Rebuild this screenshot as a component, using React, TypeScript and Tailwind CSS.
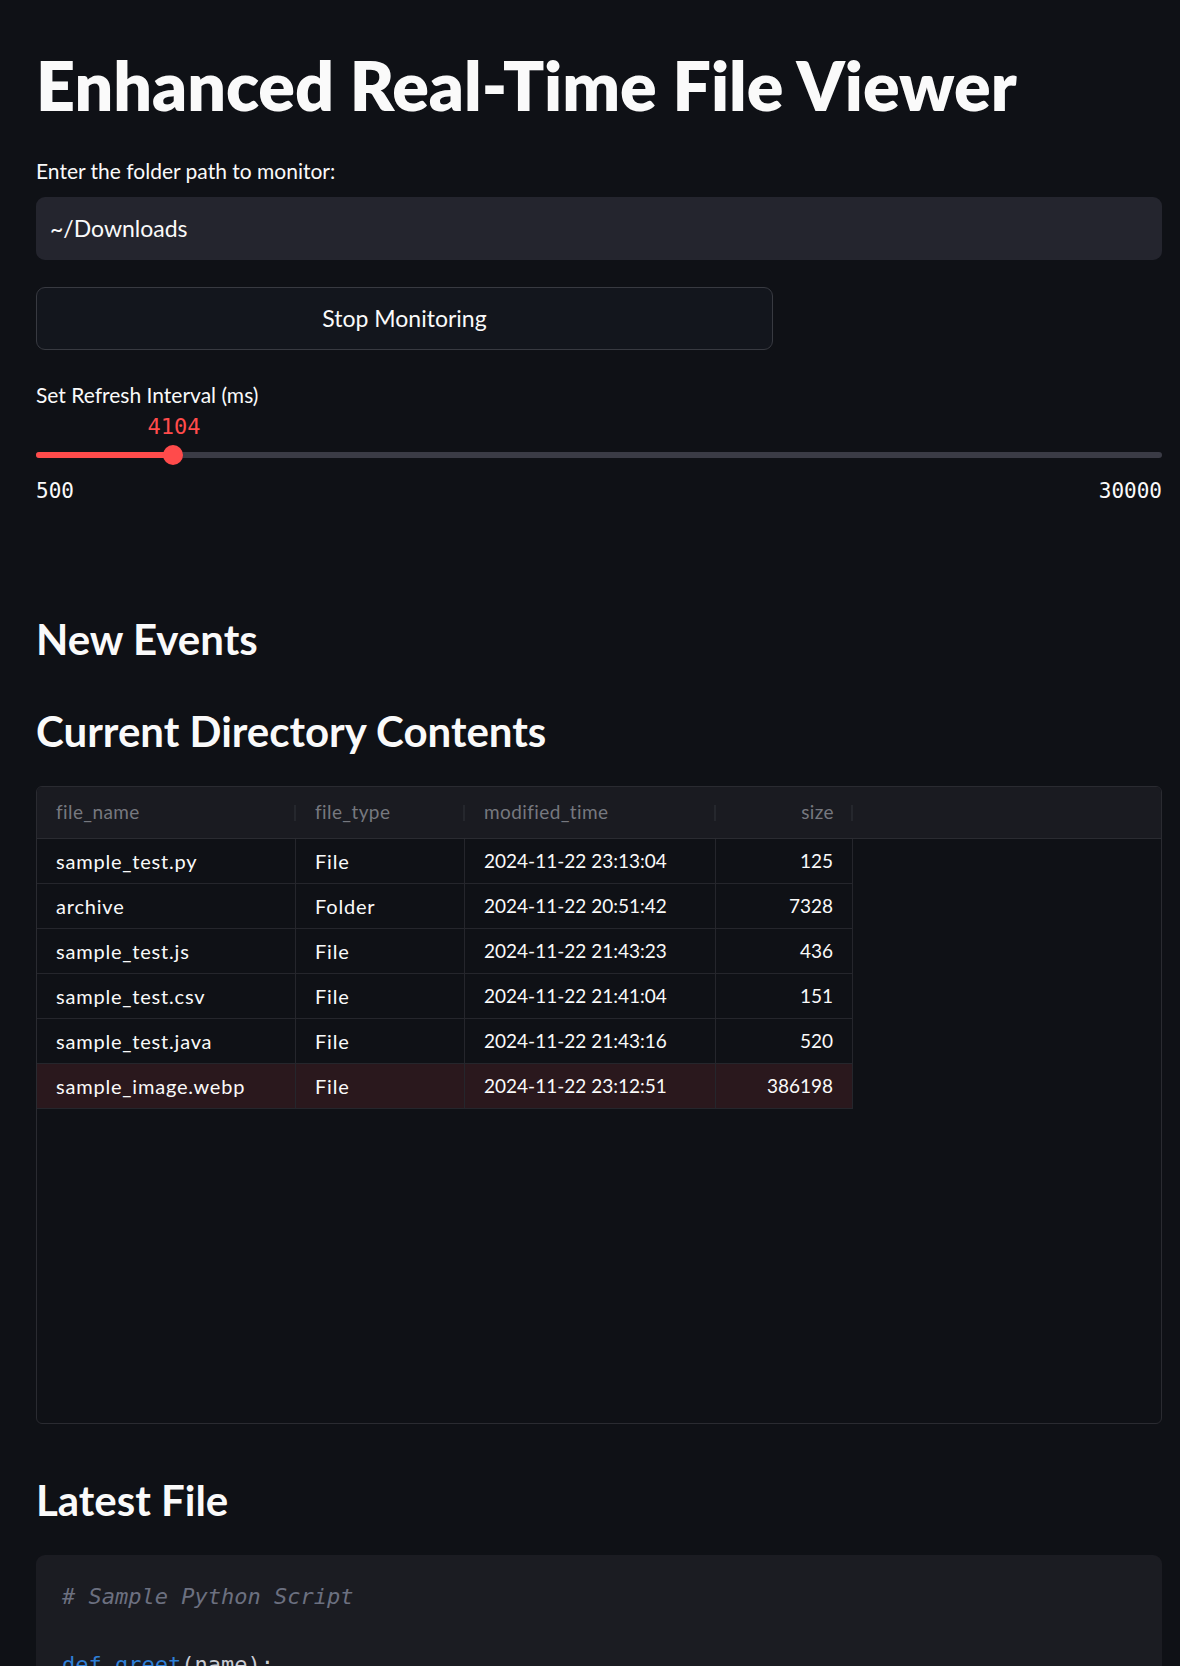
import React from "react";

interface FileRow {
  name: string;
  type: string;
  time: string;
  size: number;
  highlight?: boolean;
}

const rows: FileRow[] = [
  { name: "sample_test.py", type: "File", time: "2024-11-22 23:13:04", size: 125 },
  { name: "archive", type: "Folder", time: "2024-11-22 20:51:42", size: 7328 },
  { name: "sample_test.js", type: "File", time: "2024-11-22 21:43:23", size: 436 },
  { name: "sample_test.csv", type: "File", time: "2024-11-22 21:41:04", size: 151 },
  { name: "sample_test.java", type: "File", time: "2024-11-22 21:43:16", size: 520 },
  { name: "sample_image.webp", type: "File", time: "2024-11-22 23:12:51", size: 386198, highlight: true },
];

const HeaderCell: React.FC<{ label: string; width: string; right?: boolean }> = ({ label, width, right }) => (
  <div className={`${width} h-full flex items-center`}>
    <span className={`flex-1 px-[19px] ${right ? "text-right pr-[17px]" : ""}`}>{label}</span>
    <span className="w-[2px] h-[16px] bg-[#25272d]" />
  </div>
);

const FileTable: React.FC = () => (
  <div className="mt-[30px] h-[638px] border border-[#2a2b31] rounded-[6px] overflow-hidden bg-[#0f1116] text-[19px]">
    <div className="flex h-[52px] bg-[#1a1b21] border-b border-[#2a2b31] text-[#76787f] tracking-[0.4px]">
      <HeaderCell label="file_name" width="w-[259px]" />
      <HeaderCell label="file_type" width="w-[169px]" />
      <HeaderCell label="modified_time" width="w-[251px]" />
      <HeaderCell label="size" width="w-[137px]" right />
    </div>
    {rows.map((r) => (
      <div
        key={r.name}
        className={`flex w-[816px] h-[45px] border-b border-[#25262c] ${r.highlight ? "bg-[#2a181d]" : ""}`}
      >
        <div className="w-[259px] flex items-center px-[19px] border-r border-[#25262c] text-[20px] tracking-[0.8px]">
          {r.name}
        </div>
        <div className="w-[169px] flex items-center px-[19px] border-r border-[#25262c] text-[20px] tracking-[0.8px]">
          {r.type}
        </div>
        <div className="w-[251px] flex items-center px-[19px] border-r border-[#25262c]">{r.time}</div>
        <div className="w-[137px] flex items-center justify-end px-[19px] border-r border-[#25262c]">{r.size}</div>
      </div>
    ))}
  </div>
);

const RefreshSlider: React.FC = () => (
  <div className="font-['DejaVu_Sans_Mono',monospace]">
    <div className="relative mt-[8px] h-[64px]">
      <span className="absolute top-0 left-[138px] -translate-x-1/2 text-[22px] leading-[24px] text-[#ff4b4b]">
        4104
      </span>
      <div className="absolute top-[37px] left-0 right-0 h-[6px] rounded-full bg-[#3a3b45]" />
      <div className="absolute top-[37px] left-0 w-[138px] h-[6px] rounded-full bg-[#ff4b4b]" />
      <div className="absolute top-[30px] left-[127px] w-[20px] h-[20px] rounded-full bg-[#ff4b4b]" />
    </div>
    <div className="flex justify-between h-[24px] text-[21px] leading-[24px]">
      <span>500</span>
      <span>30000</span>
    </div>
  </div>
);

export default function App() {
  return (
    <div className="min-h-screen bg-[#0f1116] text-[#fafafa] font-[Lato,sans-serif]">
      <div className="w-[1126px] ml-[36px] pt-[44px] pb-[40px]">
        <h1 className="text-[68px] leading-[82px] font-extrabold">Enhanced Real-Time File Viewer</h1>

        <label className="block mt-[33px] text-[21px] leading-[24px]">Enter the folder path to monitor:</label>
        <div className="mt-[14px] h-[63px] rounded-[9px] bg-[#24252e] flex items-center pl-[14px] text-[23px]">
          ~/Downloads
        </div>

        <button className="mt-[27px] w-[737px] h-[63px] rounded-[9px] border border-[#383a41] bg-[#13161d] text-[23px] text-[#fafafa] flex items-center justify-center">
          Stop Monitoring
        </button>

        <div className="mt-[33px] text-[21px] leading-[24px]">Set Refresh Interval (ms)</div>
        <RefreshSlider />

        <h2 className="mt-[111px] text-[42px] leading-[50px] font-bold">New Events</h2>
        <h2 className="mt-[42px] text-[42px] leading-[50px] font-bold">Current Directory Contents</h2>

        <FileTable />

        <h2 className="mt-[51px] text-[42px] leading-[50px] font-bold">Latest File</h2>

        <pre className="mt-[30px] rounded-[9px] bg-[#1b1c22] pt-[25px] pb-[26px] pl-[26px] font-['DejaVu_Sans_Mono',monospace] text-[22px] leading-[34px] text-[#e6e6e6]">
          <span className="italic text-[#6c7080]"># Sample Python Script</span>
          {"\n\n"}
          <span className="text-[#2f7fd6]">def</span> <span className="text-[#2f7fd6]">greet</span>
          <span className="text-[#c9ccd4]">(name):</span>
          {"\n"}
          {"    "}
          <span className="text-[#2f7fd6]">print</span>
          <span className="text-[#c9ccd4]">(</span>
          <span className="text-[#21a366]">f"Hello, {"{name}"}!"</span>
          <span className="text-[#c9ccd4]">)</span>
          {"\n\n"}
          <span className="text-[#2f7fd6]">greet</span>
          <span className="text-[#c9ccd4]">(</span>
          <span className="text-[#21a366]">"World"</span>
          <span className="text-[#c9ccd4]">)</span>
        </pre>
      </div>
    </div>
  );
}
